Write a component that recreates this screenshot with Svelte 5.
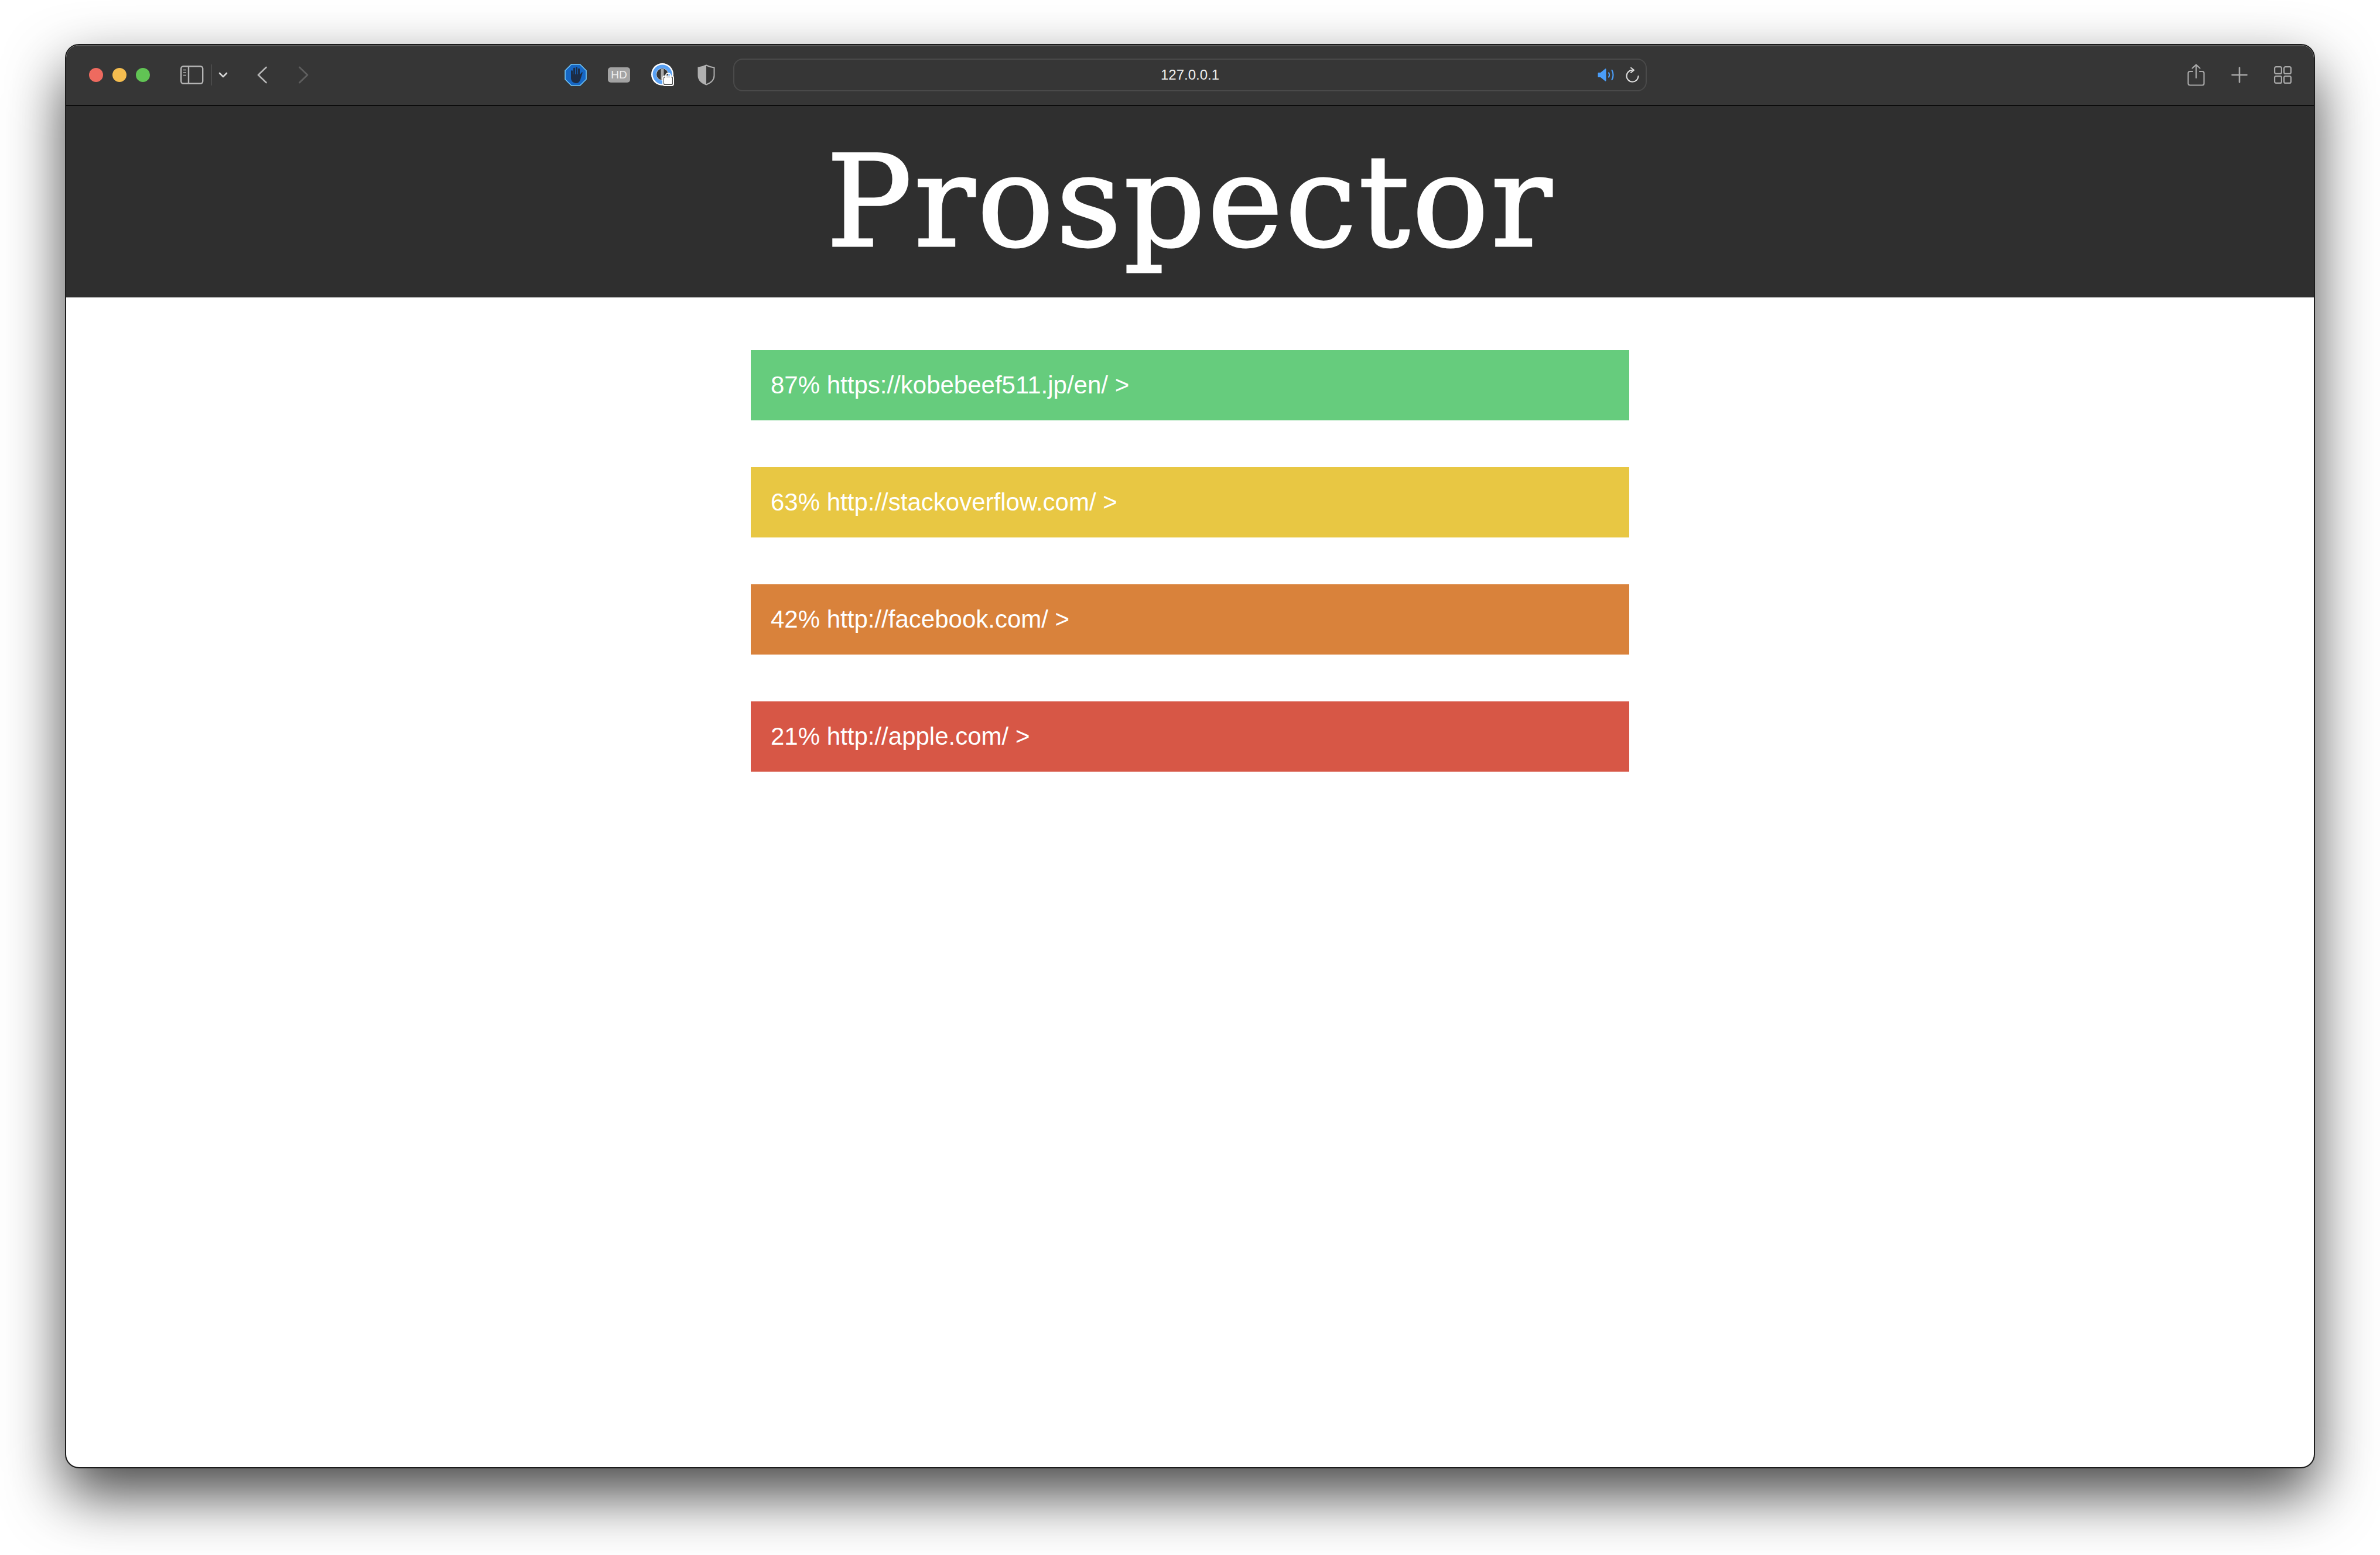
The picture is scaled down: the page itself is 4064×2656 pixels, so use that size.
<script>
  const results = [
    { score: 87, url: "https://kobebeef511.jp/en/", tone: "green" },
    { score: 63, url: "http://stackoverflow.com/", tone: "yellow" },
    { score: 42, url: "http://facebook.com/", tone: "orange" },
    { score: 21, url: "http://apple.com/", tone: "red" }
  ];
</script>

<div class="page">
  <div class="window">
    <div class="toolbar">
      <div class="dots">
        <span class="dot close"></span>
        <span class="dot min"></span>
        <span class="dot max"></span>
      </div>

      <svg class="sidebar" width="40" height="32" viewBox="0 0 40 32" fill="none" stroke="#b4b4b4" stroke-width="2.4">
        <rect x="1.2" y="1.2" width="37" height="29.6" rx="4" />
        <path d="M14 1v30" />
        <path d="M5 7.500h5M5 12h5M5 16.500h5" stroke-width="1.600" />
      </svg>
      <span class="divider"></span>
      <svg class="chev" width="16" height="10" viewBox="0 0 16 10" fill="none" stroke="#d6d6d6" stroke-width="2.600" stroke-linecap="round" stroke-linejoin="round">
        <path d="M2 2l6 6 6-6" />
      </svg>
      <svg class="back" width="18" height="30" viewBox="0 0 18 30" fill="none" stroke="#b4b4b4" stroke-width="2.800" stroke-linecap="round" stroke-linejoin="round">
        <path d="M15.500 2L2 15l13.500 13" />
      </svg>
      <svg class="forward" width="18" height="30" viewBox="0 0 18 30" fill="none" stroke="#5e5e5e" stroke-width="2.800" stroke-linecap="round" stroke-linejoin="round">
        <path d="M2.500 2L16 15 2.500 28" />
      </svg>

      <svg class="adblock" width="38" height="38" viewBox="0 0 38 38">
        <path d="M11.500 1h15L37 11.500v15L26.500 37h-15L1 26.500v-15z" fill="#1667c4" stroke="#72c8fb" stroke-width="1.600" />
        <path d="M12.500 12.500v11M16.500 8v12M20.500 7v12M24.500 9v12" stroke="#1c2c45" stroke-width="3" stroke-linecap="round" fill="none" />
        <path d="M11 18h15.500l3-3.500c.8-.6 1.500.2 1.200 1L27 27c-1.500 4-3.500 6-7.500 6-5 0-8.500-3.500-8.500-9z" fill="#1c2c45" />
      </svg>
      <span class="hd">HD</span>
      <svg class="onepass" width="40" height="40" viewBox="0 0 40 40">
        <circle cx="19" cy="19" r="19" fill="#fff" />
        <circle cx="19" cy="19" r="13.500" fill="none" stroke="#5aa2f5" stroke-width="6" />
        <circle cx="19" cy="19" r="10" fill="#363636" />
        <rect x="16.500" y="10" width="5" height="18" fill="#a8a8a8" />
        <rect x="20" y="22" width="18" height="16" rx="3" fill="#363636" stroke="#fff" stroke-width="2" />
        <path d="M25 24v-3a4 4 0 0 1 8 0v3" fill="none" stroke="#fff" stroke-width="2" />
        <rect x="22" y="24" width="14" height="12" rx="2" fill="#fff" />
      </svg>
      <svg class="shield" width="30" height="36" viewBox="0 0 30 36">
        <path d="M15 1.500C19 3.500 24 5 28.500 5.500V19C28.500 26 23 31.500 15 34.500 7 31.500 1.500 26 1.500 19V5.500C6 5 11 3.500 15 1.500z" fill="none" stroke="#b0b0b0" stroke-width="2" />
        <path d="M15 1.500V34.500C7 31.500 1.500 26 1.500 19V5.500C6 5 11 3.500 15 1.500z" fill="#b0b0b0" />
      </svg>

      <div class="address">
        <span></span>
        <span class="host">127.0.0.1</span>
        <div class="address-icons">
          <svg width="28" height="22" viewBox="0 0 28 22" fill="none">
            <path d="M0.500 8.500c0-1 .6-1.500 1.500-1.500h3L13 .500c.7-.5 1.500-.2 1.500.8v19.400c0 1-.8 1.300-1.500.8L5 15H2c-.9 0-1.500-.5-1.500-1.500z" fill="#4a9df8" />
            <path d="M19 7.500c1.300 2 1.300 5 0 7M24.500 3c2.700 4.500 2.700 11.500 0 16" stroke="#4a9df8" stroke-width="2.200" stroke-linecap="round" />
          </svg>
          <svg width="24" height="26" viewBox="0 0 24 26" fill="none" stroke="#dcdcdc" stroke-width="2" stroke-linecap="round" stroke-linejoin="round">
            <path d="M12.500 4.800A10 10 0 1 0 22.500 15" />
            <path d="M10 0.800l5 4-5 4.200" />
          </svg>
        </div>
      </div>

      <div class="actions">
        <svg width="30" height="38" viewBox="0 0 30 38" fill="none" stroke="#a8a8a8" stroke-width="2.200" stroke-linecap="round" stroke-linejoin="round">
          <path d="M9 13H4.500A3 3 0 0 0 1.500 16v17.500a3 3 0 0 0 3 3h21a3 3 0 0 0 3-3V16a3 3 0 0 0-3-3H21" />
          <path d="M15 24V1.500M8.500 7.500L15 1.500l6.500 6" />
        </svg>
        <svg class="plus" width="28" height="28" viewBox="0 0 28 28" fill="none" stroke="#a8a8a8" stroke-width="2.600" stroke-linecap="round">
          <path d="M14 1.500v25M1.500 14h25" />
        </svg>
        <svg class="tabs" width="30" height="30" viewBox="0 0 30 30" fill="none" stroke="#a8a8a8" stroke-width="2.200">
          <rect x="1.100" y="1.100" width="11.800" height="11.800" rx="2.500" />
          <rect x="17.100" y="1.100" width="11.800" height="11.800" rx="2.500" />
          <rect x="1.100" y="17.100" width="11.800" height="11.800" rx="2.500" />
          <rect x="17.100" y="17.100" width="11.800" height="11.800" rx="2.500" />
        </svg>
      </div>
    </div>

    <header class="banner">
      <h1>Prospector</h1>
    </header>

    <main class="results">
      {#each results as result}
        <a class="result {result.tone}" href={result.url}>{result.score}% {result.url} &gt;</a>
      {/each}
    </main>
  </div>
</div>

<style>
  :global(body) {
    background: #fff;
  }

  .page {
    padding: 75px 111px 148px;
    font-family: "Liberation Sans", Arial, sans-serif;
    overflow: hidden;
  }

  .window {
    box-sizing: border-box;
    height: 2433px;
    background: #fff;
    border: 2px solid #1c1c1c;
    border-radius: 24px;
    overflow: hidden;
    box-shadow: 0 45px 100px rgba(0, 0, 0, 0.72);
  }

  .toolbar {
    box-sizing: border-box;
    height: 104px;
    display: flex;
    align-items: center;
    padding: 0 38px 3px 39px;
    background: #363636;
    border-top: 2px solid #5a5a5a;
    border-bottom: 2px solid #0c0c0c;
    color: #eee;
  }

  .toolbar svg {
    flex: none;
    display: block;
  }

  .dots {
    display: flex;
    gap: 16px;
  }

  .dot {
    width: 24px;
    height: 24px;
    border-radius: 50%;
  }

  .close { background: #ee6a5f; }
  .min { background: #f5bd4f; }
  .max { background: #61c454; }

  .sidebar { margin-left: 52px; }

  .divider {
    width: 2px;
    height: 36px;
    margin-left: 12px;
    background: #4a4a4a;
  }

  .chev { margin-left: 11px; }
  .back { margin-left: 50px; }
  .forward { margin-left: 52px; }
  .adblock { margin-left: 437px; }

  .hd {
    margin-left: 36px;
    width: 38px;
    height: 26px;
    border-radius: 5px;
    background: #a3a3a3;
    color: #eee;
    font-size: 19px;
    line-height: 26px;
    text-align: center;
  }

  .onepass { margin-left: 36px; }
  .shield { margin-left: 39px; }

  .address {
    box-sizing: border-box;
    width: 1560px;
    height: 56px;
    margin-left: 31px;
    padding: 0 11px;
    display: grid;
    grid-template-columns: 1fr auto 1fr;
    align-items: center;
    border: 2px solid #4a4a4a;
    border-radius: 16px;
  }

  .host {
    font-size: 24px;
    color: #eeeeee;
  }

  .address-icons {
    display: flex;
    justify-content: flex-end;
    align-items: center;
    gap: 19px;
  }

  .actions {
    margin-left: auto;
    display: flex;
    align-items: center;
    gap: 45px;
  }

  .banner {
    box-sizing: border-box;
    height: 327px;
    background: #2f2f2f;
    color: #fff;
    text-align: center;
  }

  h1 {
    margin: 0;
    font-family: "DejaVu Serif", serif;
    font-size: 218px;
    font-weight: 400;
    line-height: 327px;
    letter-spacing: 3.5px;
    -webkit-text-stroke: 3px #fff;
  }

  .results {
    width: 1500px;
    margin: 90px auto 0;
    display: flex;
    flex-direction: column;
    gap: 80px;
  }

  .result {
    box-sizing: border-box;
    height: 120px;
    padding: 0 34px;
    color: #fff;
    font-size: 42px;
    line-height: 120px;
    text-decoration: none;
  }

  .green { background: #66cc7d; }
  .yellow { background: #e8c743; }
  .orange { background: #d9823b; }
  .red { background: #d75746; }
</style>
